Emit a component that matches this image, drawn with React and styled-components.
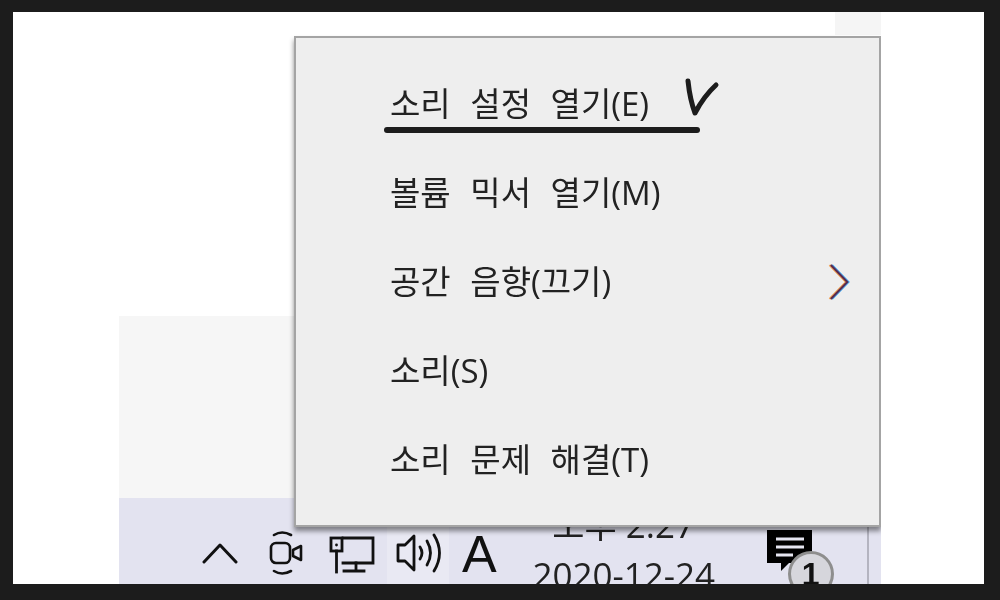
import React from "react";
import styled, { createGlobalStyle } from "styled-components";

const GlobalStyle = createGlobalStyle`
  html, body {
    margin: 0;
    padding: 0;
    background: #1c1c1c;
  }
`;

const items = [
  { label: "소리 설정 열기(E)" },
  { label: "볼륨 믹서 열기(M)" },
  { label: "공간 음향(끄기)", sub: true },
  { label: "소리(S)" },
  { label: "소리 문제 해결(T)" },
];

function App() {
  return (
    <Page>
      <GlobalStyle />
      <Shot>
        <Desktop>
          <WhiteArea>
            <TopStrip />
          </WhiteArea>
          <LightArea />
          <Taskbar>
            <TrayIcon $left={83} $top={44}>
              <svg width="36" height="22" viewBox="0 0 36 22" fill="none" stroke="#111" strokeWidth="3" strokeLinecap="round" strokeLinejoin="round">
                <path d="M2 20 L18 3 L34 20" />
              </svg>
            </TrayIcon>
            <TrayIcon $left={31} $top={31}>
              <svg width="34" height="48" viewBox="0 0 34 48" fill="none" stroke="#111" strokeWidth="2.6" strokeLinecap="round" strokeLinejoin="round">
                <path d="M5 6 Q13 1 22 6" />
                <rect x="2" y="14" width="19" height="20" rx="5" />
                <path d="M24 21 L32 17 V31 L24 27 Z" />
                <path d="M5 42 Q13 47 22 42" />
              </svg>
            </TrayIcon>
            <TrayIcon $left={26} $top={38}>
              <svg width="46" height="38" viewBox="0 0 46 38" fill="none" stroke="#111" strokeWidth="2.8" strokeLinecap="square">
                <path d="M14 2 H44 V27 H14" />
                <rect x="2" y="2" width="11" height="13" />
                <path d="M7.5 15 V36" />
                <path d="M27 27 V35 M15 35 H35" />
                <circle cx="7.5" cy="9" r="1.4" fill="#111" stroke="none" />
              </svg>
            </TrayIcon>
            <SpeakerCell>
              <svg width="47" height="40" viewBox="0 0 47 40" fill="none" stroke="#111" strokeWidth="2.8" strokeLinecap="round" strokeLinejoin="round">
                <path d="M2 12 H9 L18 3 V37 L9 28 H2 Z" />
                <path d="M24 14 Q28 20 24 26" />
                <path d="M31 8 Q38 20 31 32" />
                <path d="M38 2 Q49 20 38 38" />
              </svg>
            </SpeakerCell>
            <InputLang>A</InputLang>
            <Clock>
              <span>오후 2:27</span>
              <span>2020-12-24</span>
            </Clock>
            <Notify>
              <svg width="46" height="42" viewBox="0 0 46 42">
                <path d="M0 0 H45 V33 H22 L14 41 V33 H0 Z" fill="#000" />
                <path d="M9 9 H37 M9 17 H37 M9 25 H26" stroke="#e6e6f1" strokeWidth="3" />
              </svg>
              <Badge>1</Badge>
            </Notify>
            <Divider />
          </Taskbar>
          <Menu>
            {items.map((item) => (
              <MenuRow key={item.label}>
                <span>{item.label}</span>
                {item.sub && (
                  <Chevron width="22" height="38" viewBox="0 0 22 38" fill="none" strokeWidth="2">
                    <path d="M1.5 2 L18 19 L1.5 36" stroke="#f0a050" />
                    <path d="M4 2 L20.5 19 L4 36" stroke="#40a8f0" />
                    <path d="M2.8 2 L19.3 19 L2.8 36" stroke="#5a2a50" />
                  </Chevron>
                )}
              </MenuRow>
            ))}
            <PenUnderline />
            <PenCheck width="36" height="42" viewBox="0 0 36 42" fill="none" stroke="#1c1c1c" strokeWidth="5" strokeLinecap="round" strokeLinejoin="round">
              <path d="M4 5 Q6 24 11 37 Q20 20 32 9" />
            </PenCheck>
          </Menu>
        </Desktop>
      </Shot>
    </Page>
  );
}

const Page = styled.div`
  width: 1000px;
  height: 600px;
  box-sizing: border-box;
  padding: 12px 16px 16px 13px;
  background: #1c1c1c;
  overflow: hidden;
`;

const Shot = styled.div`
  height: 100%;
  background: #fff;
  padding-left: 106px;
  filter: blur(0.6px);
`;

const Desktop = styled.div`
  position: relative;
  width: 762px;
  height: 100%;
  display: flex;
  flex-direction: column;
  overflow: hidden;
`;

const WhiteArea = styled.div`
  flex: 1;
  display: flex;
  justify-content: flex-end;
  align-items: flex-start;
  background: #fff;
`;

const TopStrip = styled.div`
  width: 46px;
  height: 23px;
  background: #f5f5f5;
`;

const LightArea = styled.div`
  height: 182px;
  background: #f6f6f6;
`;

const Taskbar = styled.div`
  height: 86px;
  display: flex;
  align-items: flex-start;
  background: #e3e3f0;
`;

const TrayIcon = styled.div`
  margin-left: ${(p) => p.$left}px;
  padding-top: ${(p) => p.$top}px;
  display: flex;
`;

const SpeakerCell = styled.div`
  display: flex;
  height: 100%;
  box-sizing: border-box;
  margin-left: 12px;
  padding: 35px 6px 0 9px;
  background: #e9e9f3;
`;

const InputLang = styled.div`
  margin-left: 13px;
  padding-top: 26px;
  font-family: "Liberation Sans", sans-serif;
  font-size: 52px;
  line-height: 60px;
  color: #111;
`;

const Clock = styled.div`
  width: 182px;
  margin-left: 36px;
  margin-top: 2px;
  display: flex;
  flex-direction: column;
  align-items: center;
  font-family: "Open Sans", "Noto Sans CJK KR", sans-serif;
  font-size: 35px;
  line-height: 50px;
  color: #222;
  white-space: nowrap;
`;

const Notify = styled.div`
  position: relative;
  margin-left: 52px;
  padding-top: 32px;
  display: flex;
`;

const Badge = styled.div`
  position: absolute;
  left: 21px;
  top: 53px;
  width: 46px;
  height: 46px;
  box-sizing: border-box;
  border: 3px solid #8e8e8e;
  border-radius: 50%;
  background: #d6d6dc;
  display: flex;
  justify-content: center;
  font-family: "Liberation Sans", sans-serif;
  font-weight: 700;
  font-size: 32px;
  line-height: 40px;
  color: #111;
`;

const Divider = styled.div`
  width: 2px;
  height: 100%;
  margin-left: 54px;
  background: #b4b4c0;
`;

const Menu = styled.div`
  position: absolute;
  left: 175px;
  top: 24px;
  width: 587px;
  height: 491px;
  box-sizing: border-box;
  padding: 21px 29px 21px 94px;
  border: 2px solid #a4a4a4;
  background: #eeeeee;
  box-shadow: 0 4px 5px rgba(0, 0, 0, 0.45);
  display: flex;
  flex-direction: column;
`;

const MenuRow = styled.div`
  height: 89px;
  flex: none;
  box-sizing: border-box;
  padding-bottom: 4px;
  display: flex;
  align-items: center;
  justify-content: space-between;
  font-family: "Open Sans", "Noto Sans CJK KR", sans-serif;
  font-size: 33px;
  word-spacing: 11px;
  color: #222;
  white-space: nowrap;
`;

const Chevron = styled.svg`
  flex: none;
  margin-top: 4px;
`;

const PenUnderline = styled.div`
  position: absolute;
  left: 88px;
  top: 89px;
  width: 316px;
  height: 6px;
  border-radius: 3px;
  background: #1c1c1c;
`;

const PenCheck = styled.svg`
  position: absolute;
  left: 388px;
  top: 38px;
`;

export default App;
